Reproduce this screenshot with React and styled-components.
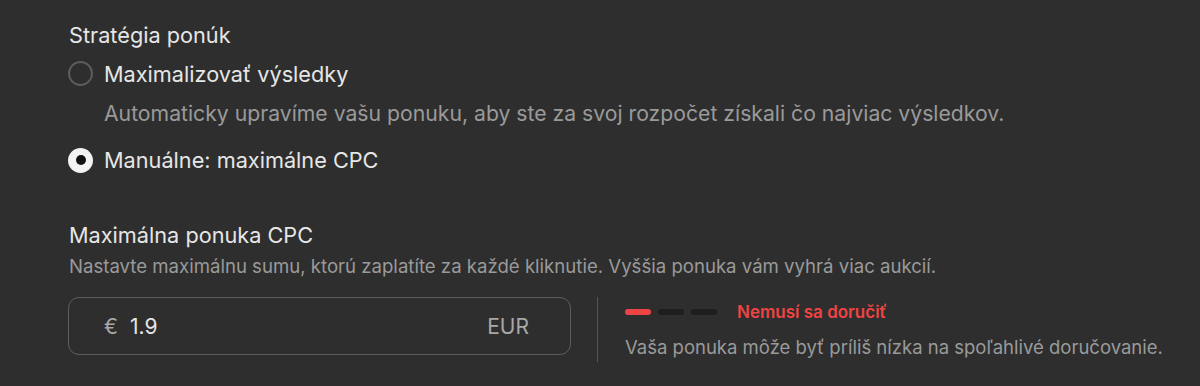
import React from 'react';
import styled, { createGlobalStyle } from 'styled-components';

const GlobalStyle = createGlobalStyle`
  html, body {
    margin: 0;
    padding: 0;
    background: #2e2e2e;
  }
  body {
    font-family: Inter, "Noto Sans", sans-serif;
    color: #e6e6e6;
  }
`;

const Page = styled.div`
  width: 1200px;
  height: 386px;
  padding: 20px 0 0 69px;
  box-sizing: border-box;
  background: #2e2e2e;
`;

const Label = styled.div`
  font-size: 21.7px;
  line-height: 30px;
  color: #e6e6e6;
`;

const Options = styled.div`
  display: flex;
  flex-direction: column;
  margin-left: -1px;
`;

const OptionRow = styled.label`
  display: flex;
  align-items: center;
  gap: 11px;
  height: 30px;
  font-size: 21.7px;
  color: #e6e6e6;
  margin-top: ${(p) => p.$top || 0}px;
`;

const Radio = styled.span`
  width: 25px;
  height: 25px;
  box-sizing: border-box;
  border-radius: 50%;
  display: flex;
  align-items: center;
  justify-content: center;
  border: ${(p) => (p.$checked ? 'none' : '2px solid #5c5c5c')};
  background: ${(p) => (p.$checked ? '#f2f2f2' : 'transparent')};

  &::after {
    content: '';
    display: ${(p) => (p.$checked ? 'block' : 'none')};
    width: 10px;
    height: 10px;
    border-radius: 50%;
    background: #111;
  }
`;

const OptionHint = styled.div`
  font-size: 21.2px;
  line-height: 30px;
  color: #9a9a9a;
  margin: 9px 0 0 36px;
`;

const BidSection = styled.div`
  margin-top: 44.5px;
`;

const Hint = styled.div`
  font-size: 18.6px;
  line-height: 26px;
  color: #9a9a9a;
  margin-top: 3.5px;
`;

const BidRow = styled.div`
  display: flex;
  align-items: flex-start;
  margin-top: 18px;
  margin-left: -1px;
`;

const InputBox = styled.div`
  width: 503px;
  height: 58px;
  box-sizing: border-box;
  border: 1.5px solid #5e5e5e;
  border-radius: 11px;
  display: flex;
  align-items: center;
  padding: 0 41px 0 35px;
  font-size: 21px;
  color: #e6e6e6;
`;

const Currency = styled.span`
  color: #a8a8a8;
  margin-right: 12px;
`;

const Value = styled.span`
  flex: 1;
`;

const Unit = styled.span`
  color: #a8a8a8;
`;

const Status = styled.div`
  margin-left: 26px;
  border-left: 1px solid #555;
  padding: 1.5px 0 0 27px;
  height: 65px;
  box-sizing: border-box;
`;

const Meter = styled.div`
  display: flex;
  align-items: center;
  gap: 7px;
  height: 26px;
`;

const Bar = styled.span`
  width: 26px;
  height: 6px;
  border-radius: 3px;
  background: ${(p) => (p.$on ? '#ef4444' : '#1e1e1e')};
`;

const Warning = styled.span`
  margin-left: 13px;
  font-size: 17px;
  font-weight: 600;
  color: #ef4444;
  line-height: 26px;
`;

const StatusText = styled.div`
  font-size: 18.5px;
  color: #9a9a9a;
  line-height: 26px;
  margin-top: 9.5px;
`;

export default function App() {
  return (
    <Page>
      <GlobalStyle />
      <Label>Stratégia ponúk</Label>
      <Options>
        <OptionRow $top={8.5}>
          <Radio />
          Maximalizovať výsledky
        </OptionRow>
        <OptionHint>
          Automaticky upravíme vašu ponuku, aby ste za svoj rozpočet získali čo najviac výsledkov.
        </OptionHint>
        <OptionRow $top={17.5}>
          <Radio $checked />
          Manuálne: maximálne CPC
        </OptionRow>
      </Options>
      <BidSection>
        <Label>Maximálna ponuka CPC</Label>
        <Hint>
          Nastavte maximálnu sumu, ktorú zaplatíte za každé kliknutie. Vyššia ponuka vám vyhrá viac aukcií.
        </Hint>
        <BidRow>
          <InputBox>
            <Currency>€</Currency>
            <Value>1.9</Value>
            <Unit>EUR</Unit>
          </InputBox>
          <Status>
            <Meter>
              <Bar $on />
              <Bar />
              <Bar />
              <Warning>Nemusí sa doručiť</Warning>
            </Meter>
            <StatusText>Vaša ponuka môže byť príliš nízka na spoľahlivé doručovanie.</StatusText>
          </Status>
        </BidRow>
      </BidSection>
    </Page>
  );
}
